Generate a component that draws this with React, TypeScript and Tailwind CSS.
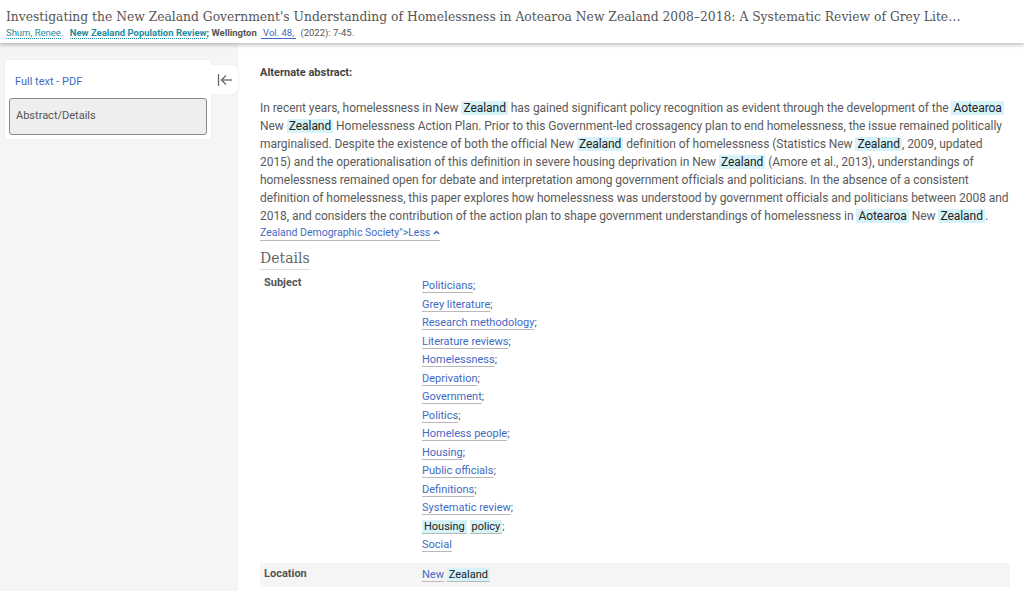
import { ReactNode } from "react";

const HL = ({ children }: { children: ReactNode }) => (
  <span className="bg-[#d6f3fa] text-[#222] px-[2px]">{children}</span>
);

const subjects = [
  "Politicians",
  "Grey literature",
  "Research methodology",
  "Literature reviews",
  "Homelessness",
  "Deprivation",
  "Government",
  "Politics",
  "Homeless people",
  "Housing",
  "Public officials",
  "Definitions",
  "Systematic review",
];

const linkCls =
  "text-[#3f6ac4] underline decoration-[#b9b9b9] underline-offset-[3px] decoration-[1px]";

function Header() {
  return (
    <div className="h-[43px] bg-white shadow-[0_2px_4px_rgba(0,0,0,0.25)] relative z-10 px-[6px] pt-[6px]">
      <div
        className="max-w-[958px] truncate text-[13.7px] leading-[20px] text-[#555] [font-stretch:condensed]"
        style={{ fontFamily: '"DejaVu Serif Condensed", "DejaVu Serif", serif' }}
      >
        Investigating the New Zealand Government's Understanding of Homelessness in Aotearoa New Zealand 2008–2018: A Systematic Review of Grey Literature
      </div>
      <div className="text-[9.5px] leading-[14px] text-[#555] whitespace-nowrap">
        <span className="text-[#1d8ca0] border-b border-dotted border-[#1d8ca0]">Shum, Renee</span>
        <span>. </span>
        <span className="ml-[4px] font-bold text-[#1d8ca0] border-b border-dotted border-[#1d8ca0]">
          New Zealand Population Review
        </span>
        <span className="font-bold">; Wellington</span>
        <span className="ml-[4px] text-[#3f6ac4] border-b border-[#3f6ac4]">&nbsp;Vol. 48,&nbsp;</span>
        <span className="ml-[4px]">(2022): 7-45.</span>
      </div>
    </div>
  );
}

function Sidebar() {
  return (
    <div className="w-[238px] shrink-0 bg-[#f5f5f5] pt-[17px] pl-[5px] relative">
      <div className="flex items-start">
        <div className="w-[210px] bg-white rounded-[4px] shadow-[0_0_2px_rgba(0,0,0,0.08)] px-[4px] pt-[14px] pb-[4px]">
          <div className="text-[11px] text-[#3f6ac4] pl-[6px] h-[18px]">Full text - PDF</div>
          <div className="mt-[6px] h-[37px] bg-[#eeeeee] border border-[#8a8a8a] rounded-[3px] flex items-center pl-[6px] text-[11px] text-[#555]">
            Abstract/Details
          </div>
        </div>
        <div className="mt-[5px] w-[27px] h-[29px] bg-white rounded-r-[6px] flex items-center justify-center shadow-[1px_0_2px_rgba(0,0,0,0.06)]">
          <svg width="16" height="14" viewBox="0 0 16 14" fill="none" stroke="#666" strokeWidth="1.3">
            <path d="M1.5 1v12" />
            <path d="M15 7H4.5" />
            <path d="M9 2.5L4.5 7L9 11.5" />
          </svg>
        </div>
      </div>
    </div>
  );
}

function Main() {
  return (
    <div className="flex-1 pl-[22px] pr-[14px] pt-[22px] text-[#555]">
      <div className="text-[11px] font-bold text-[#444] leading-[16px]">Alternate abstract:</div>
      <p className="mt-[18px] -mr-[3px] text-[12px] leading-[18px] text-[#5a5a5a] tracking-[-0.05px]">
        In recent years, homelessness in New <HL>Zealand</HL> has gained significant policy recognition as evident through the development of the <HL>Aotearoa</HL> New <HL>Zealand</HL> Homelessness Action Plan. Prior to this Government-led crossagency plan to end homelessness, the issue remained politically marginalised. Despite the existence of both the official New <HL>Zealand</HL> definition of homelessness (Statistics New <HL>Zealand</HL>, 2009, updated 2015) and the operationalisation of this definition in severe housing deprivation in New <HL>Zealand</HL> (Amore et al., 2013), understandings of homelessness remained open for debate and interpretation among government officials and politicians. In the absence of a consistent definition of homelessness, this paper explores how homelessness was understood by government officials and politicians between 2008 and 2018, and considers the contribution of the action plan to shape government understandings of homelessness in <HL>Aotearoa</HL> New <HL>Zealand</HL>.
      </p>
      <div className="text-[10.5px] leading-[16px]">
        <span className="text-[#3f6ac4] border-b border-[#b9b9b9] pb-[1px]">
          Zealand Demographic Society"&gt;Less
          <svg className="inline ml-[3px] mb-[1px]" width="7" height="5" viewBox="0 0 7 5" fill="none" stroke="#3f6ac4" strokeWidth="1.5">
            <path d="M1 4L3.5 1.5L6 4" />
          </svg>
        </span>
      </div>
      <div
        className="mt-[7px] text-[14px] leading-[20px] text-[#666] inline-block border-b border-[#ddd] pb-[1px]"
        style={{ fontFamily: '"DejaVu Serif", serif' }}
      >
        Details
      </div>
      <div className="mt-[5px] flex text-[11px]">
        <div className="w-[162px] pl-[4px] font-bold text-[#555]">Subject</div>
        <div className="flex flex-col">
          {subjects.map((s) => (
            <div key={s} className="h-[18.5px] leading-[18px] pt-[2px]">
              <span className={linkCls}>{s}</span>;
            </div>
          ))}
          <div className="h-[18.5px] leading-[18px] pt-[2px]">
            <span className="border-b border-[#b9b9b9]">
              <HL>Housing</HL>
            </span>{" "}
            <span className="border-b border-[#b9b9b9]">
              <HL>policy</HL>
            </span>
            ;
          </div>
          <div className="h-[18.5px] leading-[18px] pt-[2px]">
            <span className={linkCls}>Social</span>
          </div>
        </div>
      </div>
      <div className="mt-[10px] flex text-[11px] bg-[#f5f5f5] h-[24px] items-center">
        <div className="w-[162px] pl-[4px] font-bold text-[#555]">Location</div>
        <div className="pt-[2px]">
          <span className={linkCls}>New</span>{" "}
          <span className="border-b border-[#b9b9b9]">
            <HL>Zealand</HL>
          </span>
        </div>
      </div>
    </div>
  );
}

export default function App() {
  return (
    <div className="w-[1024px] h-[591px] overflow-hidden bg-white flex flex-col" style={{ fontFamily: "Roboto, sans-serif" }}>
      <Header />
      <div className="flex flex-1">
        <Sidebar />
        <Main />
      </div>
    </div>
  );
}
